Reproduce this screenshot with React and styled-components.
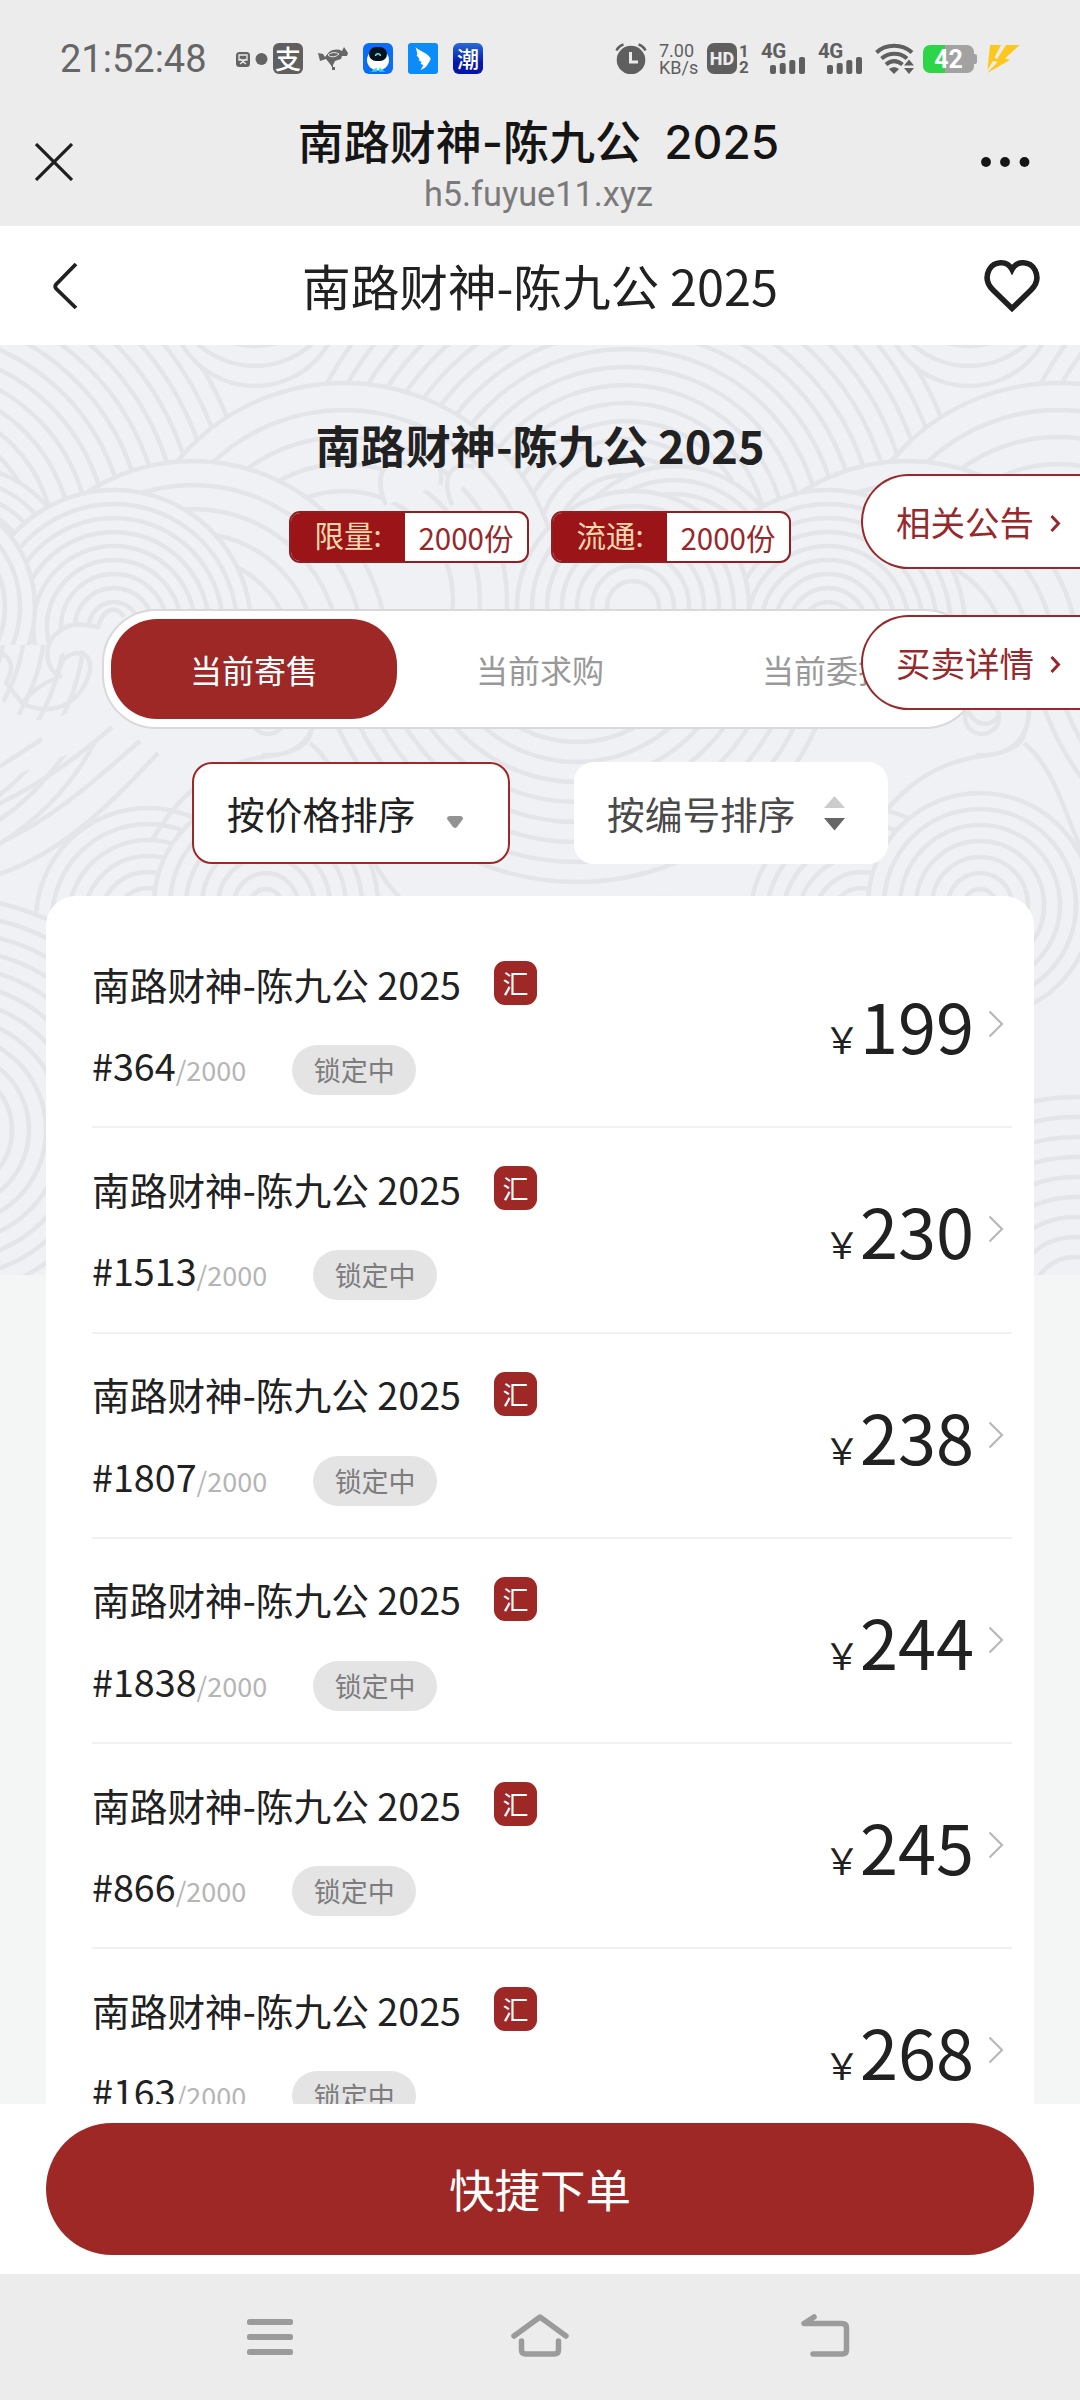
import styled, { createGlobalStyle } from "styled-components";

const TITLE = "南路财神-陈九公 2025";

const ITEMS = [
  { no: 364, price: 199 },
  { no: 1513, price: 230 },
  { no: 1807, price: 238 },
  { no: 1838, price: 244 },
  { no: 866, price: 245 },
  { no: 163, price: 268 },
];

const TABS = ["当前寄售", "当前求购", "当前委托"];

// The wave pattern repeats horizontally every TILE pixels
const TILE = 714;
const OFFSETS = [-TILE, 0, TILE];

// [cx, cy, outer radius, ring step, number of rings]
const LOWER_FANS = [
  [577, 275, 262, 20, 10],
  [148, 575, 112, 16, 7],
  [270, 560, 62, 16, 4],
  [980, 560, 112, 16, 7],
  [664, 785, 232, 17, 13],
  [1075, 955, 203, 20, 9],
];
const UPPER_FANS = [
  [626, 200, 340, 18, 18],
  [344, 255, 217, 27, 5],
  [193, 311, 195, 24, 5],
  [674, 235, 114, 14, 8],
  [114, 282, 137, 14, 9],
  [633, 262, 116, 15, 7],
];

const Fans = ({ fans }) =>
  fans.map(([cx, cy, r, step, count], i) =>
    OFFSETS.map((dx) => (
      <g key={`${i}${dx}`}>
        {Array.from({ length: count }, (_, n) => (
          <circle key={n} cx={cx + dx} cy={cy} r={Math.max(r - n * step, 3)} />
        ))}
      </g>
    ))
  );

const Waves = () => (
  <WaveSvg viewBox="0 0 1080 930" fill="#f0f1f5" stroke="#e4e5e8" strokeWidth="4.5">
    <Fans fans={LOWER_FANS} />
    {OFFSETS.map((dx) => (
      <g key={dx} transform={`translate(${dx} 0)`}>
        <path d="M152 495C178 450 214 420 262 412C298 408 316 398 310 376" fill="none" />
        <path d="M310 398C360 440 350 520 420 570" fill="none" />
        <path d="M222 362C222 420 300 424 314 382V340H222Z" stroke="none" />
        <path d="M262 410C298 412 320 392 314 352" fill="none" />
        <circle cx="268" cy="372" r="17" />
        <path d="M254 366C262 382 276 382 284 372" />
      </g>
    ))}
    <g clipPath="url(#upper)">
      <Fans fans={UPPER_FANS} />
      {OFFSETS.map((dx) => (
        <g key={dx} transform={`translate(${dx} 0)`}>
          <circle cx="255" cy="-44" r="85" />
          <circle cx="255" cy="-64" r="85" />
          <circle cx="255" cy="-84" r="85" />
          <path d="M386 160C372 130 386 108 410 120C430 104 446 120 440 140M452 160C440 130 452 116 474 122" />
        </g>
      ))}
    </g>
    <path
      d="M0 352C20 386 74 384 92 338C98 310 84 300 66 306C52 312 48 326 60 330C48 334 38 310 54 292C66 276 88 276 100 284L112 262L112 392L-10 440Z"
      stroke="none"
    />
    <path
      d="M-4 306C14 312 14 324 6 338L22 358C50 372 80 362 90 326C92 306 76 304 64 314C60 324 54 330 62 332C44 326 42 296 60 286C72 276 86 280 98 282C104 262 116 260 124 272M22 358C34 344 44 338 54 334M-4 424L42 394M-4 460C40 440 80 410 112 382M-4 500C60 470 100 430 140 396M-4 530C60 510 110 460 158 408"
      fill="none"
    />
    <clipPath id="upper">
      <rect width="1080" height="300" />
    </clipPath>
  </WaveSvg>
);

const AlipayIcon = () => (
  <AppIcon $bg="#5f5f5f" $size={26}>支</AppIcon>
);

const ShotIcon = () => (
  <svg width="32" height="16" viewBox="0 0 32 16">
    <rect x="0" y="1" width="14" height="15" rx="3.5" fill="#636363" />
    <path d="M3 4h8v5H3zM4 13l6-5M10 13L4 8" stroke="#ececec" strokeWidth="1.3" fill="none" />
    <circle cx="25.5" cy="8" r="6" fill="#636363" />
  </svg>
);

const SatelliteIcon = () => (
  <svg width="30" height="23" viewBox="0 0 30 23" fill="#666">
    <path d="M0 6l5 1 2 3 4-5c5-3 9-3 13-1l2-4 4 6-1 3-5 0-1 3-6 2-2 4v2h2v3h-3v-3l-2-3-4-5-6 2-1-4z" />
    <path d="M10 8c3-3 8-3 11-1-3 3-8 4-11 1z" stroke="#ececec" strokeWidth="1" />
  </svg>
);

const RobotIcon = () => (
  <svg width="30" height="31" viewBox="0 0 30 31">
    <rect width="30" height="31" rx="6" fill="#0b6cf5" />
    <ellipse cx="15" cy="17" rx="11" ry="10.5" fill="#fff" />
    <rect x="6" y="4" width="18" height="14" rx="7" fill="#04121f" />
    <path d="M12.500 13c.5-3 4.500-3 5 0" stroke="#5de3ea" strokeWidth="1.400" fill="none" />
    <path d="M10 28l3-2v2zM20 28l-3-2v2z" stroke="#27d9e6" strokeWidth="1.500" />
  </svg>
);

const WingIcon = () => (
  <svg width="30" height="31" viewBox="0 0 30 31">
    <rect width="30" height="31" rx="3" fill="#0c8cf8" />
    <path d="M7.500 4c2 3 12 6 15 11 .6 2-1 3-2 5-2 4-5 6-8 7l3-5-3-1 1-2-3-2 1-1-3-4 1-1z" fill="#fff" />
  </svg>
);

const AlarmIcon = () => (
  <svg width="32" height="31" viewBox="0 0 32 31">
    <circle cx="16" cy="17" r="14.300" fill="#5f5f5f" />
    <path d="M1.500 7.500C3 4.500 5 2.500 8.500 1.500M30.500 7.500C29 4.500 27 2.500 23.500 1.500" stroke="#5f5f5f" strokeWidth="2.600" fill="none" />
    <path d="M15.500 9v10h7.500" stroke="#ececec" strokeWidth="3" fill="none" />
  </svg>
);

const SignalIcon = () => (
  <Signal>
    4G
    <svg width="35" height="17" viewBox="0 0 35 17" fill="#5f5f5f">
      <rect x="0" y="8" width="6" height="9" rx="2" />
      <rect x="9.700" y="6" width="6" height="11" rx="2" />
      <rect x="19.300" y="3" width="6" height="14" rx="2" />
      <rect x="29" y="0" width="6" height="17" rx="2" />
    </svg>
  </Signal>
);

const WifiIcon = () => (
  <svg width="40" height="31" viewBox="0 0 40 31" fill="none" stroke="#5f5f5f" strokeWidth="4">
    <path d="M1.500 9.500C11 .5 27 .5 37 9.500" />
    <path d="M6.500 15.500C14 9 25 9 32 15.500" />
    <path d="M11 21.500C16 17.200 22 17.200 27.500 21.500" />
    <path d="M14 26c3-2.500 7-2.500 10 0l-5 5z" fill="#5f5f5f" stroke="none" />
    <path d="M29 22.500l5-6 5 6zM29 25l5 6 5-6z" fill="#5f5f5f" stroke="none" />
  </svg>
);

const BoltIcon = () => (
  <svg width="34" height="28" viewBox="0 0 34 28" fill="#fcc81e">
    <path d="M4 0h11L8.500 12.500L11 14L20 0H33.500L19 13.500L24 15L2 27.500L12 17L7 16L1.500 25Z" />
    <path d="M1 28L12 17L14 18L5 25.500Z" />
  </svg>
);

const CloseIcon = () => (
  <svg width="38" height="38" viewBox="0 0 38 38" stroke="#1f1f1f" strokeWidth="3.200">
    <path d="M1 1L37 37M37 1L1 37" />
  </svg>
);

const MoreIcon = () => (
  <svg width="50" height="12" viewBox="0 0 50 12" fill="#151515">
    <circle cx="6" cy="6" r="4.900" />
    <circle cx="25" cy="6" r="4.900" />
    <circle cx="44.500" cy="6" r="4.900" />
  </svg>
);

const BackIcon = () => (
  <svg width="26" height="48" viewBox="0 0 26 48" fill="none" stroke="#212121" strokeWidth="3.800">
    <path d="M24 2L4 22.500Q2.500 24.500 4 26.500L24 46" />
  </svg>
);

const HeartIcon = () => (
  <svg width="56" height="54" viewBox="0 0 56 54" fill="none" stroke="#1f1f1f" strokeWidth="5.500">
    <path d="M28 10.500C23 1 10 2 5 11C1 19 4 26 9 31L28 49.500L47 31C52 26 55 19 51 11C46 2 33 1 28 10.500Z" />
  </svg>
);

const Chevron = () => (
  <svg width="16" height="28" viewBox="0 0 16 28" fill="none" stroke="#b8b8b8" strokeWidth="2.200">
    <path d="M1.500 1.500L14 14L1.500 26.500" />
  </svg>
);

const SmallChevron = () => (
  <svg width="11" height="17" viewBox="0 0 11 17" fill="none" stroke="#97272a" strokeWidth="3">
    <path d="M1.500 1L8.500 8.500L1.500 16" />
  </svg>
);

const App = () => (
  <Screen>
    <GlobalStyle />
    <StatusBar>
      <Clock>21:52:48</Clock>
      <StatusLeft>
        <ShotIcon />
        <AlipayIcon />
        <SatelliteIcon />
        <RobotIcon />
        <WingIcon />
        <AppIcon $bg="linear-gradient(#2a6bd8, #0415a8 65%)" $size={22}>潮</AppIcon>
      </StatusLeft>
      <StatusRight>
        <AlarmIcon />
        <Speed>
          <span>7.00</span>
          <span>KB/s</span>
        </Speed>
        <HdGroup>
          <Hd>HD</Hd>
          <SimNumbers>
            <span>1</span>
            <span>2</span>
          </SimNumbers>
        </HdGroup>
        <SignalIcon />
        <SignalIcon />
        <WifiIcon />
        <Battery>42</Battery>
        <BoltIcon />
      </StatusRight>
    </StatusBar>

    <BrowserBar>
      <CloseIcon />
      <BrowserTitle>
        <strong>{TITLE}</strong>
        <span>h5.fuyue11.xyz</span>
      </BrowserTitle>
      <MoreIcon />
    </BrowserBar>

    <NavBar>
      <BackIcon />
      <NavTitle>{TITLE}</NavTitle>
      <HeartIcon />
    </NavBar>

    <Content>
      <Waves />
      <HeroTitle>{TITLE}</HeroTitle>
      <Counts>
        <Count>
          <b>限量:</b>
          <span>2000份</span>
        </Count>
        <Count>
          <b>流通:</b>
          <span>2000份</span>
        </Count>
      </Counts>

      <Tabs>
        {TABS.map((tab, i) => (
          <Tab key={tab} $active={i === 0}>
            {tab}
          </Tab>
        ))}
      </Tabs>

      <Sorts>
        <SortButton $active>
          <span>按价格排序</span>
          <svg width="16" height="12" viewBox="0 0 16 12">
            <path d="M3 0h10q3 0 3 3L10 11q-2 2-4 0L0 3q0-3 3-3z" fill="#939393" />
          </svg>
        </SortButton>
        <SortButton>
          <span>按编号排序</span>
          <svg width="21" height="35" viewBox="0 0 21 35">
            <path d="M10.500 0L21 12H0z" fill="#ccc" />
            <path d="M0 22h21L10.500 34.500z" fill="#666" />
          </svg>
        </SortButton>
      </Sorts>

      <List>
        {ITEMS.map((item) => (
          <Row key={item.no}>
            <div>
              <RowTitle>
                {TITLE}
                <Tag>汇</Tag>
              </RowTitle>
              <RowSub>
                <Serial>#{item.no}</Serial>
                <Total>/2000</Total>
                <Locked>锁定中</Locked>
              </RowSub>
            </div>
            <Price>
              <small>￥</small>
              {item.price}
            </Price>
            <Chevron />
          </Row>
        ))}
      </List>

      <SideLinks>
        <SideLink>
          相关公告
          <SmallChevron />
        </SideLink>
        <SideLink>
          买卖详情
          <SmallChevron />
        </SideLink>
      </SideLinks>
    </Content>

    <Footer>
      <OrderButton>快捷下单</OrderButton>
    </Footer>

    <SystemNav>
      <svg width="46" height="38" viewBox="0 0 46 38" fill="#9b9b9b">
        <rect y="1" width="46" height="6" rx="2.500" />
        <rect y="16" width="46" height="6" rx="2.500" />
        <rect y="31" width="46" height="6" rx="2.500" />
      </svg>
      <svg width="60" height="46" viewBox="0 0 60 46" fill="none" stroke="#9b9b9b" strokeWidth="5.500" strokeLinecap="round" strokeLinejoin="round">
        <path d="M4 24L30 5L56 24" />
        <path d="M11.500 29V38Q11.500 42 16 42H44Q48.500 42 48.500 38V29" />
      </svg>
      <svg width="50" height="46" viewBox="0 0 50 46" fill="none" stroke="#9b9b9b" strokeWidth="5.500" strokeLinecap="round" strokeLinejoin="round">
        <path d="M14 5L4 11.500H42Q46.500 11.500 46.500 16V38Q46.500 42 42 42H13" />
      </svg>
    </SystemNav>
  </Screen>
);

export default App;

const GlobalStyle = createGlobalStyle`
  * {
    box-sizing: border-box;
  }
  body {
    margin: 0;
    font-family: "Noto Sans CJK SC", sans-serif;
    color: #212121;
  }
  svg {
    display: block;
    flex: none;
  }
`;

const Screen = styled.div`
  width: 1080px;
  height: 2400px;
  display: flex;
  flex-direction: column;
  overflow: hidden;
  background: #f4f6f5;
`;

const StatusBar = styled.header`
  height: 116px;
  flex: none;
  display: flex;
  align-items: center;
  padding: 1px 60px 0 60px;
  background: #ececec;
  color: #5f5f5f;
  font-family: Roboto, sans-serif;
`;

const Clock = styled.div`
  width: 176px;
  font-size: 38px;
  color: #666;
`;

const StatusLeft = styled.div`
  display: flex;
  align-items: center;
  gap: 15px;

  > :first-child {
    margin-right: -10px;
  }
`;

const AppIcon = styled.div`
  width: 30px;
  height: 31px;
  border-radius: 6px;
  background: ${(props) => props.$bg};
  color: #fff;
  font: 500 ${(props) => props.$size}px/29px "Noto Sans CJK SC", sans-serif;
  text-align: center;
`;

const StatusRight = styled.div`
  margin-left: auto;
  display: flex;
  align-items: center;
  gap: 12px;

  > :last-child {
    margin-left: -3px;
  }
`;

const Speed = styled.div`
  width: 36px;
  display: flex;
  flex-direction: column;
  font-size: 18px;
  line-height: 17px;
`;

const HdGroup = styled.div`
  width: 42px;
  display: flex;
  gap: 2px;
`;

const Hd = styled.div`
  width: 30px;
  height: 31px;
  border-radius: 7px;
  background: #5f5f5f;
  color: #ececec;
  font: 800 18px/32px Roboto, sans-serif;
  text-align: center;
`;

const SimNumbers = styled.div`
  display: flex;
  flex-direction: column;
  align-items: center;
  font: 700 17px/16px Roboto, sans-serif;
`;

const Signal = styled.div`
  width: 45px;
  height: 31px;
  font: 700 20.5px/17px Roboto, sans-serif;
  letter-spacing: -0.5px;

  svg {
    margin: -3px 0 0 9px;
  }
`;

const Battery = styled.div`
  position: relative;
  width: 51px;
  height: 28px;
  margin: 0 3px 0 -4px;
  border-radius: 7px;
  background: linear-gradient(90deg, #2cd647 43%, #a2a2a2 43%);
  color: #fff;
  font: 700 25px/29px Roboto, sans-serif;
  text-align: center;

  &::after {
    content: "";
    position: absolute;
    right: -3px;
    top: 9px;
    width: 3px;
    height: 10px;
    border-radius: 0 2px 2px 0;
    background: #a2a2a2;
  }
`;

const BrowserBar = styled.div`
  height: 110px;
  flex: none;
  display: flex;
  align-items: center;
  justify-content: space-between;
  padding: 0 50px 18px 35px;
  background: #ececec;
`;

const BrowserTitle = styled.div`
  display: flex;
  flex-direction: column;
  align-items: center;
  margin: 5px 0 0 24px;

  strong {
    font: 500 46px/56px Inter, "Noto Sans CJK SC", sans-serif;
    word-spacing: 11px;
    color: #151515;
  }
  span {
    font: 400 34.3px/44px Roboto, sans-serif;
    color: #7a7a7a;
    margin-top: 2px;
  }
`;

const NavBar = styled.nav`
  height: 119px;
  flex: none;
  display: flex;
  align-items: center;
  justify-content: space-between;
  padding: 0 40px 0 52px;
  background: #fff;
`;

const NavTitle = styled.h1`
  margin: -1px 0 0 18px;
  font-size: 48.6px;
  font-weight: 400;
  line-height: 60px;
`;

const Content = styled.main`
  position: relative;
  isolation: isolate;
  flex: 1;
  min-height: 0;
  overflow: hidden;
  padding: 69px 46px 0;
`;

// decorative layer behind the page content
const WaveSvg = styled.svg`
  position: absolute;
  z-index: -1;
  left: 0;
  top: 0;
  width: 1080px;
  height: 930px;
  background: #f0f1f5;
`;

const HeroTitle = styled.h2`
  margin: 0;
  font-size: 45.1px;
  line-height: 62px;
  text-align: center;
`;

const Counts = styled.div`
  display: flex;
  justify-content: center;
  gap: 22px;
  margin-top: 35px;
`;

const Count = styled.div`
  width: 240px;
  height: 52px;
  display: flex;
  border: 2px solid #8f1f22;
  border-radius: 11px;
  overflow: hidden;
  background: #fff;
  text-align: center;

  b {
    width: 114px;
    background: #9b1518;
    color: #fbd9ae;
    font-size: 29.5px;
    line-height: 43px;
    font-weight: 400;
  }
  span {
    flex: 1;
    color: #97282b;
    font-size: 29.5px;
    line-height: 49px;
  }
`;

const Tabs = styled.div`
  width: 877px;
  height: 120px;
  margin: 46px auto 0;
  padding: 8px 7.5px;
  display: flex;
  border: 2px solid #d9d9dc;
  border-radius: 54px;
  background: #fff;
`;

const Tab = styled.div`
  flex: 1;
  border-radius: 46px;
  background: ${(props) => (props.$active ? "#9e2825" : "transparent")};
  color: ${(props) => (props.$active ? "#fff" : "#999")};
  font-size: 32px;
  line-height: 100px;
  text-align: center;
`;

const Sorts = styled.div`
  display: flex;
  gap: 64px;
  margin: 33px 0 0 146px;
`;

const SortButton = styled.button`
  width: ${(props) => (props.$active ? 318 : 314)}px;
  height: 102px;
  display: flex;
  align-items: center;
  gap: ${(props) => (props.$active ? 32 : 29)}px;
  padding: 0 0 0 ${(props) => (props.$active ? 33 : 31)}px;
  border: 2px solid ${(props) => (props.$active ? "#9e2825" : "#fff")};
  border-radius: 20px;
  background: #fff;
  color: ${(props) => (props.$active ? "#212121" : "#4a4a4a")};
  font-family: inherit;
  font-size: 37.7px;

  span {
    margin-top: -1px;
  }
  svg {
    margin-top: ${(props) => (props.$active ? 17 : 1)}px;
  }
`;

const List = styled.section`
  margin-top: 32px;
  padding: 27px 22px 0 46px;
  border-radius: 30px 30px 0 0;
  background: #fff;
`;

const Row = styled.article`
  height: 205.3px;
  display: flex;
  border-bottom: 2px solid #f1f1f1;
  padding: 32px 8px 0 0;

  > svg {
    margin: 55px 0 0 14px;
  }
`;

const RowTitle = styled.div`
  display: flex;
  align-items: center;
  height: 56px;
  font-size: 37.7px;
`;

const Tag = styled.span`
  width: 43px;
  height: 44px;
  margin: 0 0 0 33px;
  border-radius: 11px;
  background: #9e2825;
  color: #fff;
  font-size: 26px;
  line-height: 44px;
  text-align: center;
`;

const RowSub = styled.div`
  display: flex;
  align-items: baseline;
  height: 50px;
  margin-top: 29px;
  line-height: 50px;
`;

const Serial = styled.span`
  font-size: 37.7px;
`;

const Total = styled.span`
  font-size: 27px;
  color: #b5b5b5;
`;

const Locked = styled.span`
  width: 124px;
  height: 50px;
  margin-left: 46px;
  border-radius: 25px;
  background: #e4e4e4;
  color: #7d7d7d;
  font-size: 27px;
  text-align: center;
`;

const Price = styled.div`
  margin-left: auto;
  font-size: 68.5px;
  line-height: 100px;
  margin-top: 20px;

  small {
    font-size: 36px;
  }
`;

// floats over the tabs, flush with the right edge
const SideLinks = styled.aside`
  position: absolute;
  top: 129px;
  right: 0;
  display: flex;
  flex-direction: column;
  gap: 46px;
`;

const SideLink = styled.a`
  width: 219px;
  height: 95px;
  display: flex;
  align-items: center;
  gap: 16px;
  padding: 0 0 2px 33px;
  border: 2.5px solid #97282b;
  border-right: 0;
  border-radius: 48px 0 0 48px;
  background: #fff;
  color: #97282b;
  font-size: 34.5px;

  svg {
    margin-top: 6px;
  }
`;

const Footer = styled.footer`
  height: 170px;
  flex: none;
  padding: 19px 46px;
  background: #fff;
`;

const OrderButton = styled.button`
  width: 100%;
  height: 132px;
  padding: 0 0 3px;
  border: 0;
  border-radius: 66px;
  background: #9e2825;
  color: #fff;
  font-family: inherit;
  font-size: 45.5px;
`;

const SystemNav = styled.div`
  height: 126px;
  flex: none;
  display: flex;
  justify-content: space-between;
  align-items: center;
  padding: 0 230px 1px 247px;
  background: #ececec;

  svg:nth-child(2) {
    margin: -4px 13px 0 0;
  }
  svg:nth-child(3) {
    margin-top: -4px;
  }
`;
